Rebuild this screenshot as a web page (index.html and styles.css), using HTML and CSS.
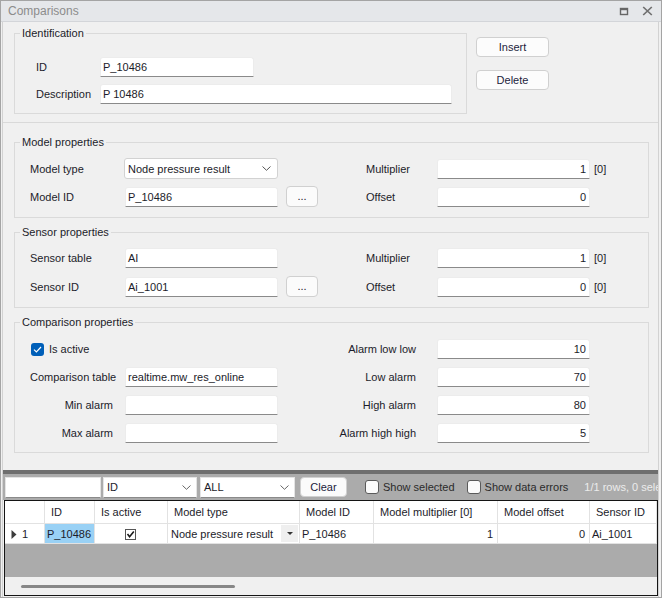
FILE: index.html
```html
<!DOCTYPE html>
<html>
<head>
<meta charset="utf-8">
<link rel="stylesheet" href="styles.css">
</head>
<body>
<div class="window">
  <div class="titlebar">
    <span class="title">Comparisons</span>
    <div class="title-btns">
      <svg width="10" height="9" viewBox="0 0 10 9"><rect x="1.5" y="1.5" width="7" height="6" fill="none" stroke="#666" stroke-width="1.4"/><rect x="1" y="1" width="8" height="2.2" fill="#666"/></svg>
      <svg width="11" height="10" viewBox="0 0 11 10"><path d="M1.2 1 L9.8 9 M9.8 1 L1.2 9" stroke="#707070" stroke-width="1.7"/></svg>
    </div>
  </div>
  <div class="content">
    <div class="top">
      <div class="group ident">
        <span class="group-title">Identification</span>
        <span class="lbl">ID</span><div class="input w154">P_10486</div>
        <span class="lbl">Description</span><div class="input w352">P 10486</div>
      </div>
      <div class="btn-col">
        <button class="btn">Insert</button>
        <button class="btn">Delete</button>
      </div>
    </div>

    <div class="main">
      <div class="group props">
        <span class="group-title">Model properties</span>
        <div class="prow">
          <span class="c1">Model type</span>
          <div class="select c2"><span>Node pressure result</span><svg width="9" height="5" viewBox="0 0 9 5"><path d="M0.5 0.5 L4.5 4.3 L8.5 0.5" fill="none" stroke="#555" stroke-width="1"/></svg></div>
          <span class="c5">Multiplier</span>
          <div class="input num c6">1</div>
          <span class="unit c7">[0]</span>
        </div>
        <div class="prow">
          <span class="c1">Model ID</span>
          <div class="input c2 shift">P_10486</div>
          <button class="dots c3">...</button>
          <span class="c5">Offset</span>
          <div class="input num c6">0</div>
        </div>
      </div>

      <div class="group props">
        <span class="group-title">Sensor properties</span>
        <div class="prow">
          <span class="c1">Sensor table</span>
          <div class="input c2 shift">AI</div>
          <span class="c5">Multiplier</span>
          <div class="input num c6">1</div>
          <span class="unit c7">[0]</span>
        </div>
        <div class="prow">
          <span class="c1">Sensor ID</span>
          <div class="input c2 shift">Ai_1001</div>
          <button class="dots c3">...</button>
          <span class="c5">Offset</span>
          <div class="input num c6">0</div>
          <span class="unit c7">[0]</span>
        </div>
      </div>

      <div class="group cmp">
        <span class="group-title">Comparison properties</span>
        <div class="crow">
          <label class="check-wrap"><span class="check"><svg width="9" height="7" viewBox="0 0 9 7"><path d="M1 3.6 L3.4 6 L8 1" fill="none" stroke="#fff" stroke-width="1.2"/></svg></span>Is active</label>
          <span class="k5">Alarm low low</span>
          <div class="input num k7">10</div>
        </div>
        <div class="crow">
          <span class="k1">Comparison table</span>
          <div class="input k3">realtime.mw_res_online</div>
          <span class="k5">Low alarm</span>
          <div class="input num k7">70</div>
        </div>
        <div class="crow">
          <span class="k1">Min alarm</span>
          <div class="input k3"></div>
          <span class="k5">High alarm</span>
          <div class="input num k7">80</div>
        </div>
        <div class="crow">
          <span class="k1">Max alarm</span>
          <div class="input k3"></div>
          <span class="k5">Alarm high high</span>
          <div class="input num k7">5</div>
        </div>
      </div>
    </div>

    <div class="gridsec">
      <div class="toolbar">
        <div class="tb-input"></div>
        <div class="tb-select s1"><span>ID</span><svg width="9" height="5" viewBox="0 0 9 5"><path d="M0.5 0.5 L4.5 4.3 L8.5 0.5" fill="none" stroke="#666" stroke-width="1"/></svg></div>
        <div class="tb-select s2"><span>ALL</span><svg width="9" height="5" viewBox="0 0 9 5"><path d="M0.5 0.5 L4.5 4.3 L8.5 0.5" fill="none" stroke="#666" stroke-width="1"/></svg></div>
        <button class="tb-btn">Clear</button>
        <span class="tb-check cb1"></span><span class="tb-lbl">Show selected</span>
        <span class="tb-check cb2"></span><span class="tb-lbl">Show data errors</span>
        <span class="tb-count">1/1 rows, 0 selected</span>
      </div>
      <div class="grid">
        <table>
          <colgroup>
            <col class="w40"><col class="w50"><col class="w73"><col class="w132"><col class="w74"><col class="w124"><col class="w92"><col class="w67">
          </colgroup>
          <thead>
            <tr>
              <th></th><th>ID</th><th>Is active</th><th>Model type</th><th>Model ID</th><th>Model multiplier [0]</th><th>Model offset</th><th>Sensor ID</th>
            </tr>
          </thead>
          <tbody>
            <tr>
              <td class="rowhdr"><svg width="6" height="9" viewBox="0 0 6 9"><path d="M0.5 0 L5.5 4.5 L0.5 9 Z" fill="#3c3c3c"/></svg><span>1</span></td>
              <td class="sel">P_10486</td>
              <td class="center"><svg width="11" height="11" viewBox="0 0 11 11"><rect x="0.5" y="0.5" width="10" height="10" fill="#fff" stroke="#555"/><path d="M2.5 5 L4.6 7.8 L8.8 2.6" fill="none" stroke="#1a1a1a" stroke-width="1.6"/></svg></td>
              <td class="combo"><span>Node pressure result</span><span class="ddbtn"><svg width="6" height="3" viewBox="0 0 6 3"><path d="M0 0 L6 0 L3 3 Z" fill="#333"/></svg></span></td>
              <td>P_10486</td>
              <td class="num">1</td>
              <td class="num">0</td>
              <td>Ai_1001</td>
            </tr>
          </tbody>
        </table>
        <div class="filler"></div>
        <div class="hscroll"><div class="thumb"></div></div>
      </div>
    </div>
  </div>
</div>
</body>
</html>
```

FILE: styles.css
```css
* { box-sizing: border-box; }
html, body { margin: 0; padding: 0; }
body {
  font-family: "Liberation Sans", Arial, sans-serif;
  font-size: 11px;
  color: #1c1c2a;
  background: #f0f0f0;
}
.window {
  width: 662px;
  height: 598px;
  border: 1px solid #a4a4a4;
  display: flex;
  flex-direction: column;
  background: #f0f0f0;
  overflow: hidden;
}
.titlebar {
  height: 21px;
  flex: none;
  background: #e5e7ea;
  border-bottom: 1px solid #d3d5d9;
  display: flex;
  align-items: center;
  justify-content: space-between;
  padding: 0 8px 0 7px;
}
.title { font-size: 12px; color: #8c8c8c; }
.title-btns { display: flex; align-items: center; gap: 13px; }
.title-btns svg { display: block; }

.content {
  flex: 1;
  min-height: 0;
  display: flex;
  flex-direction: column;
  margin: 0 2px 0 1px;
  border-left: 1px solid #d2d2d2;
  border-right: 1px solid #d2d2d2;
}
.top {
  height: 101px;
  flex: none;
  border-bottom: 1px solid #d9d9d9;
  display: flex;
  align-items: flex-start;
  padding: 11px 0 0 11px;
}
.group {
  position: relative;
  border: 1px solid #dadada;
  white-space: nowrap;
}
.group-title {
  position: absolute;
  top: -8px;
  left: 5px;
  padding: 0 2px;
  background: #f0f0f0;
  line-height: 15px;
}
.ident {
  width: 453px;
  height: 81px;
  padding: 23px 0 0 21px;
  display: grid;
  grid-template-columns: 64px auto;
  grid-auto-rows: 20px;
  row-gap: 7px;
  align-items: center;
  align-content: start;
}
.w154 { width: 154px; }
.w352 { width: 352px; }
.input {
  height: 20px;
  background: #fff;
  border: 1px solid #ececec;
  border-bottom-color: #8a8a8a;
  border-radius: 3px 3px 0 0;
  padding: 0 2px;
  display: flex;
  align-items: center;
  white-space: nowrap;
  overflow: hidden;
}
.input.num { justify-content: flex-end; padding-right: 3px; }
.btn-col {
  margin: 4px 0 0 9px;
  display: flex;
  flex-direction: column;
  gap: 13px;
}
.btn {
  width: 73px;
  height: 20px;
  padding: 0;
  font: inherit;
  color: #1c1c3c;
  background: #fcfcfc;
  border: 1px solid #d0d0d0;
  border-radius: 4px;
}

.main {
  flex: 1;
  min-height: 0;
  display: flex;
  flex-direction: column;
  gap: 14px;
  padding: 19px 0 0 11px;
}
.props {
  width: 635px;
  height: 76px;
  padding: 15px 0 0 15px;
  display: flex;
  flex-direction: column;
  gap: 8px;
}
.prow {
  display: grid;
  grid-template-columns: 94px 154px 40px 48px 71px 153px auto;
  height: 20px;
  align-items: center;
}
.c1 { grid-column: 1; }
.c2 { grid-column: 2; }
.c3 { grid-column: 3; }
.c5 { grid-column: 5; }
.c6 { grid-column: 6; }
.c7 { grid-column: 7; }
.shift { margin-left: 1px; }
.select {
  height: 21px;
  background: #fff;
  border: 1px solid #d2d2d2;
  border-radius: 3px;
  display: flex;
  align-items: center;
  justify-content: space-between;
  padding: 0 6px 0 3px;
}
.select svg { display: block; }
.dots {
  justify-self: end;
  width: 32px;
  height: 21px;
  padding: 0 0 2px 0;
  font: inherit;
  color: #1c1c2a;
  background: #fbfbfb;
  border: 1px solid #d0d0d0;
  border-radius: 4px;
}
.unit { padding-left: 4px; }

.cmp {
  width: 635px;
  height: 131px;
  padding: 16px 0 0 15px;
  display: flex;
  flex-direction: column;
  gap: 8px;
}
.crow {
  display: grid;
  grid-template-columns: 83px 12px 153px 20px 118px 21px 153px;
  height: 20px;
  align-items: center;
}
.k1 { grid-column: 1; text-align: right; }
.k3 { grid-column: 3; }
.k5 { grid-column: 5; text-align: right; }
.k7 { grid-column: 7; }
.check-wrap {
  grid-column: 1 / 5;
  display: flex;
  align-items: center;
  gap: 5px;
  padding-left: 1px;
}
.check {
  width: 13px;
  height: 13px;
  border-radius: 3px;
  background: #005fb8;
  display: flex;
  align-items: center;
  justify-content: center;
}
.check svg { display: block; }

.gridsec {
  flex: none;
  height: 127px;
  border-top: 4px solid #6e6e6e;
  display: flex;
  flex-direction: column;
  padding-bottom: 1px;
}
.toolbar {
  height: 26px;
  flex: none;
  background: #ababab;
  display: flex;
  align-items: center;
  padding-left: 2px;
  white-space: nowrap;
  overflow: hidden;
}
.toolbar > * { flex: none; }
.tb-input {
  width: 96px;
  height: 21px;
  background: #fff;
  border: 1px solid #e4e4e4;
  border-bottom-color: #8a8a8a;
}
.tb-select {
  height: 21px;
  background: #fff;
  border: 1px solid #e4e4e4;
  border-bottom-color: #8a8a8a;
  display: flex;
  align-items: center;
  justify-content: space-between;
  padding: 0 5px 0 3px;
}
.tb-select svg { display: block; }
.s1 { width: 94px; margin-left: 2px; }
.s2 { width: 95px; margin-left: 3px; }
.tb-btn {
  width: 47px;
  height: 20px;
  margin-left: 5px;
  padding: 0;
  font: inherit;
  color: #1c1c3c;
  background: #fbfbfb;
  border: 1px solid #d0d0d0;
  border-radius: 4px;
}
.tb-check {
  width: 14px;
  height: 14px;
  background: #fbfbfb;
  border: 1px solid #5a5a5a;
  border-radius: 3px;
}
.cb1 { margin-left: 18px; }
.cb2 { margin-left: 12px; }
.tb-lbl { margin-left: 4px; color: #2a2a2a; }
.tb-count { margin-left: 16px; color: #ececec; }

.grid {
  height: 96px;
  flex: none;
  margin-left: 1px;
  border: 1px solid #141414;
  background: #ababab;
  display: flex;
  flex-direction: column;
  overflow: hidden;
}
table {
  border-collapse: separate;
  border-spacing: 0;
  table-layout: fixed;
  width: 652px;
  background: #fff;
  flex: none;
}
.w40 { width: 40px; }
.w50 { width: 50px; }
.w73 { width: 73px; }
.w132 { width: 132px; }
.w74 { width: 74px; }
.w124 { width: 124px; }
.w92 { width: 92px; }
.w67 { width: 67px; }
th, td {
  border-right: 1px solid #e2e2e2;
  border-bottom: 1px solid #e2e2e2;
  white-space: nowrap;
  overflow: hidden;
  font-weight: normal;
  text-align: left;
}
thead tr { height: 23px; }
th { padding: 0 0 0 6px; }
tbody tr { height: 20px; }
td { padding: 0 3px 0 2px; }
td.num { text-align: right; padding-right: 4px; }
td.sel { background: #99d1f5; }
td.center { text-align: center; }
td.center svg { display: inline-block; vertical-align: middle; }
td.rowhdr { padding-left: 6px; }
td.rowhdr svg { vertical-align: middle; margin-right: 5px; }
td.combo { padding: 0 1px 0 3px; position: relative; }
.ddbtn {
  position: absolute;
  right: 1px;
  top: 1px;
  width: 17px;
  height: 17px;
  background: #efefef;
  display: flex;
  align-items: center;
  justify-content: center;
}
.ddbtn svg { display: block; }
.filler { flex: 1; }
.hscroll {
  height: 18px;
  flex: none;
  background: #f0f0f0;
  padding: 8px 0 0 16px;
}
.thumb {
  width: 214px;
  height: 3px;
  background: #878787;
  border-radius: 2px;
}
```
